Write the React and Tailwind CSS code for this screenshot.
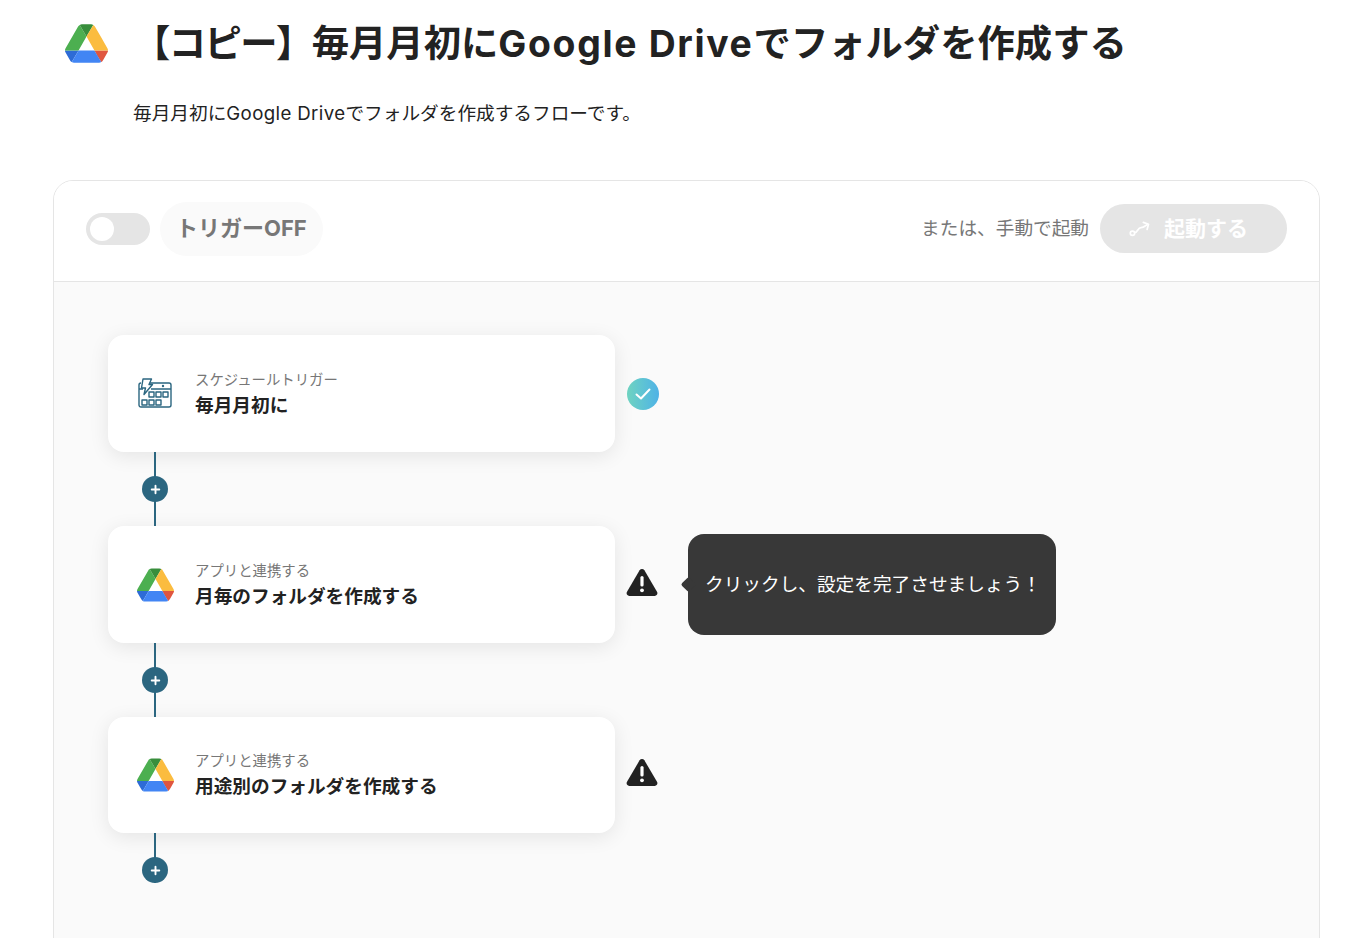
import { Plus } from 'lucide-react'

const font = { jp: '"Inter", "Noto Sans CJK JP", sans-serif' }

function DriveLogo({ className }) {
    return (
        <svg viewBox="0 0 87.3 78" className={className}>
            <path d="m6.6 66.85 3.85 6.65c.8 1.4 1.95 2.5 3.3 3.3l13.75-23.8h-27.5c0 1.55.4 3.1 1.2 4.5z" fill="#2d6bd6" />
            <path d="m43.65 25-13.75-23.8c-1.35.8-2.5 1.9-3.3 3.3l-25.4 44a9.06 9.06 0 0 0 -1.2 4.5h27.5z" fill="#4caf50" />
            <path d="m73.55 76.8c1.35-.8 2.5-1.9 3.3-3.3l1.6-2.75 7.65-13.25c.8-1.4 1.2-2.95 1.2-4.5h-27.502l5.852 11.5z" fill="#e0563f" />
            <path d="m43.65 25 13.75-23.8c-1.35-.8-2.9-1.2-4.5-1.2h-18.5c-1.6 0-3.15.45-4.5 1.2z" fill="#388e3c" />
            <path d="m59.8 53h-32.3l-13.75 23.8c1.35.8 2.9 1.2 4.5 1.2h50.8c1.6 0 3.15-.45 4.5-1.2z" fill="#4285f4" />
            <path d="m73.4 26.5-12.7-22c-.8-1.4-1.95-2.5-3.3-3.3l-13.75 23.8 16.15 28h27.45c0-1.55-.4-3.1-1.2-4.5z" fill="#fbbc3f" />
        </svg>
    )
}

function ScheduleIcon() {
    return (
        <svg viewBox="0 0 34 30" className="w-[34px] h-[30px] mb-[2px] mr-[2px]" fill="none" stroke="#2b6680" strokeWidth="1.400" strokeLinejoin="round">
            <path d="M12 5H31a2 2 0 0 1 2 2V27a2 2 0 0 1-2 2H3a2 2 0 0 1-2-2V7a2 2 0 0 1 2-2" />
            <path d="M1 11H5M13 11H33" />
            <path d="M5 1H13.500L11 6.500H14.500L6 16.500L7.500 10H3.500Z" fill="#ffffff" />
            <circle cx="25" cy="8" r="0.500" fill="#2b6680" />
            <rect x="11" y="14" width="5" height="5" />
            <rect x="18" y="14" width="5" height="5" />
            <rect x="25" y="14" width="5" height="5" />
            <rect x="4" y="22" width="5" height="5" />
            <rect x="11" y="22" width="5" height="5" />
            <rect x="18" y="22" width="5" height="5" />
        </svg>
    )
}

function WarningIcon() {
    return (
        <svg viewBox="0 0 32 28" className="w-[32px] h-[28px]">
            <path d="M13.600 2.300a2.800 2.800 0 0 1 4.800 0L31 23.800A2.800 2.800 0 0 1 28.600 28H3.400A2.800 2.800 0 0 1 1 23.800Z" fill="#222222" />
            <rect x="14.400" y="8" width="3.200" height="10.500" rx="1.600" fill="#ffffff" />
            <circle cx="16" cy="22.300" r="1.900" fill="#ffffff" />
        </svg>
    )
}

function CheckBadge() {
    return (
        <div className="w-[32px] h-[32px] rounded-full bg-gradient-to-r from-[#6fd3c0] to-[#4fb2e6] flex items-center justify-center">
            <svg viewBox="0 0 16 12" className="w-[16px] h-[12px]" fill="none" stroke="#ffffff" strokeWidth="2" strokeLinecap="round" strokeLinejoin="round">
                <path d="M1.500 6.500L6 10.500L14.500 1.500" />
            </svg>
        </div>
    )
}

function Connector({ last }) {
    return (
        <div className={`relative w-[94px] flex justify-center ${last ? 'h-[50px]' : 'h-[74px]'}`}>
            <div className="w-[2px] h-full bg-[#2b6680]"></div>
            <div className="absolute top-[24px] left-[34px] w-[26px] h-[26px] rounded-full bg-[#2b6680] flex items-center justify-center">
                <Plus size={13} strokeWidth={3.5} color="#ffffff" />
            </div>
        </div>
    )
}

function FlowCard({ icon, label, title, short }) {
    return (
        <div className={`w-[507px] shrink-0 bg-white rounded-[16px] shadow-[0_4px_20px_rgba(0,0,0,0.09)] flex items-center pl-[29px] ${short ? 'h-[116px]' : 'h-[117px]'}`}>
            <div className="w-[37px] flex justify-center">{icon}</div>
            <div className="ml-[21px] pt-[3px] flex flex-col gap-[1px]">
                <span className="text-[14.4px] leading-[20px] text-[#777777]">{label}</span>
                <span className="text-[18.67px] leading-[30px] font-bold text-[#222222]">{title}</span>
            </div>
        </div>
    )
}

export default function App() {
    return (
        <div className="w-[1372px] h-[938px] overflow-hidden bg-white" style={{ fontFamily: font.jp }}>
            <div className="flex items-center h-[86px] pl-[65px]">
                <DriveLogo className="w-[43px] h-[39px]" />
                <h1 className="ml-[25px] pt-[2px] text-[37.33px] font-bold text-[#222222] leading-none whitespace-nowrap">
                    <span className="tracking-[-1.6px]">【コピー】</span>毎月月初に<span className="tracking-[0.045em]">Google Drive</span>でフォルダを作成する
                </h1>
            </div>
            <p className="pl-[133px] mt-[15px] h-[26px] text-[18.67px] leading-[26px] text-[#222222]">
                毎月月初に<span className="tracking-[0.02em]">Google Drive</span>でフォルダを作成するフローです。
            </p>

            <div className="mt-[53px] ml-[53px] w-[1267px] h-[800px] border border-[#e5e5e5] rounded-t-[20px] overflow-hidden">
                <div className="h-[101px] bg-white border-b border-[#e5e5e5] flex items-center pl-[32px] pr-[32px] pb-[5px]">
                    <div className="w-[64px] h-[32px] rounded-full bg-[#e5e5e5] flex items-center pl-[4px]">
                        <div className="w-[24px] h-[24px] rounded-full bg-white"></div>
                    </div>
                    <div className="ml-[10px] h-[54px] px-[16px] rounded-full bg-[#fafafa] flex items-center text-[22px] font-bold text-[#777777]">
                        トリガーOFF
                    </div>
                    <div className="ml-auto text-[18.67px] text-[#777777]">または、手動で起動</div>
                    <div className="ml-[11px] w-[187px] h-[49px] rounded-full bg-[#e5e5e5] flex items-center pl-[29px] text-white">
                        <svg viewBox="0 0 24 18" className="w-[23px] h-[17px]" fill="none" stroke="#ffffff" strokeWidth="1.800" strokeLinecap="round" strokeLinejoin="round">
                            <circle cx="3.500" cy="14" r="2.300" />
                            <path d="M5.800 13.500C9 13.500 9 8 12.500 8C15 8 16 7 19 5" />
                            <path d="M15 2.500L20.500 4.500L19 10" />
                        </svg>
                        <span className="ml-[12px] text-[21px] font-bold">起動する</span>
                    </div>
                </div>

                <div className="h-[700px] bg-[#fafafa] pt-[53px] pl-[54px]">
                    <div className="flex items-center">
                        <FlowCard icon={<ScheduleIcon />} label="スケジュールトリガー" title="毎月月初に" />
                        <div className="ml-[12px]"><CheckBadge /></div>
                    </div>
                    <Connector />
                    <div className="flex items-center">
                        <FlowCard icon={<DriveLogo className="w-[37px] h-[34px]" />} label="アプリと連携する" title="月毎のフォルダを作成する" />
                        <div className="ml-[11px] mb-[6px]"><WarningIcon /></div>
                        <div className="relative ml-[30px] w-[368px] h-[101px] rounded-[16px] bg-[#383838] flex items-center pl-[17px] text-[18.67px] text-white">
                            <div className="absolute left-[-5px] top-[45px] w-[11px] h-[11px] rotate-45 rounded-[2px] bg-[#383838]"></div>
                            クリックし、設定を完了させましょう！
                        </div>
                    </div>
                    <Connector />
                    <div className="flex items-center">
                        <FlowCard short icon={<DriveLogo className="w-[37px] h-[34px]" />} label="アプリと連携する" title="用途別のフォルダを作成する" />
                        <div className="ml-[11px] mb-[6px]"><WarningIcon /></div>
                    </div>
                    <Connector last />
                </div>
            </div>
        </div>
    )
}
